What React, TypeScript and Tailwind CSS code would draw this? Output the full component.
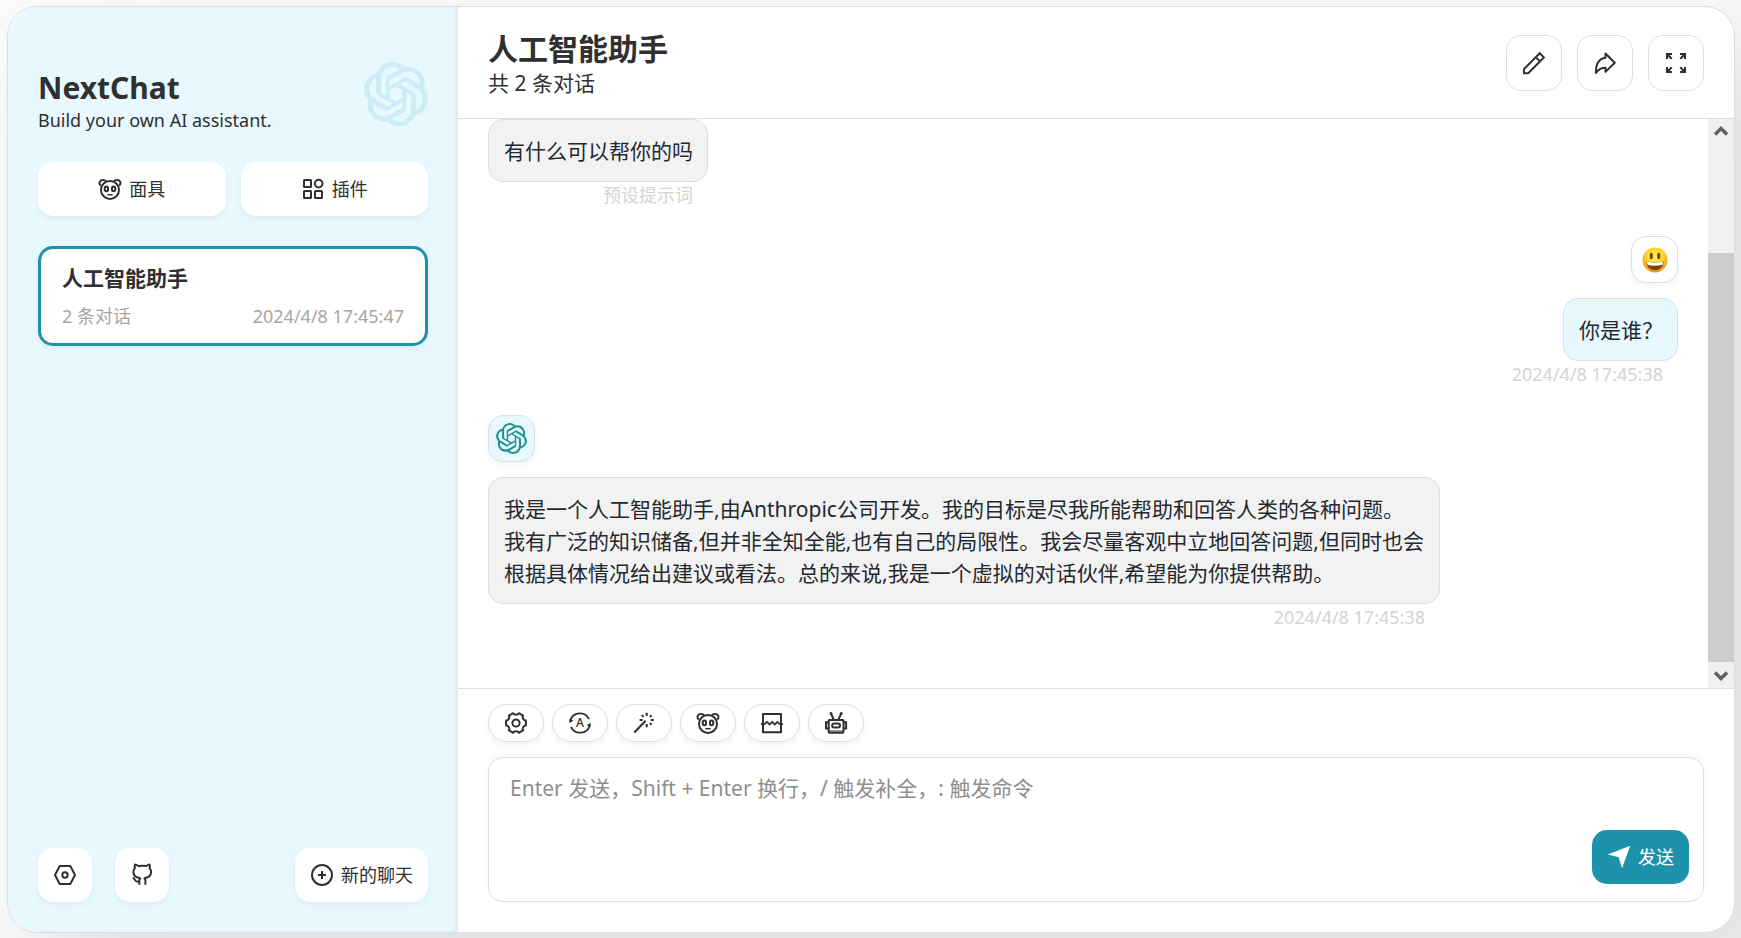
import type { ButtonHTMLAttributes, ReactNode } from "react";
import { SiOpenai } from "react-icons/si";

function Icon({ children, width = 2 }: { children: ReactNode; width?: number }) {
  return (
    <svg
      viewBox="0 0 24 24"
      className="size-6 shrink-0"
      fill="none"
      stroke="currentColor"
      strokeWidth={width}
      aria-hidden="true"
    >
      {children}
    </svg>
  );
}

const MaskIcon = () => (
  <Icon width={2}>
    <circle cx="12" cy="12.9" r="9" />
    <path d="M2.8 8.6C.2 5.8 2 2.9 5 2.9c1.500 0 2.600.6 3.200 1.700M21.200 8.600C23.800 5.800 22 2.900 19 2.900c-1.500 0-2.600.6-3.200 1.700" />
    <ellipse cx="8.400" cy="11.900" rx="1.700" ry="2.300" />
    <ellipse cx="15.600" cy="11.900" rx="1.700" ry="2.300" />
    <path d="M9.300 17.700h5.400" strokeWidth="1.500" />
  </Icon>
);

const PluginIcon = () => (
  <Icon>
    <rect x="3" y="3" width="7" height="7" rx=".6" />
    <circle cx="17.700" cy="6.600" r="3.800" />
    <rect x="3" y="14" width="7" height="7" rx=".6" />
    <rect x="14" y="14" width="7" height="7" rx=".6" />
  </Icon>
);

const HexIcon = () => (
  <Icon>
    <path d="M6.700 3h10.600L22 12l-4.700 9H6.700L2 12z" strokeLinejoin="round" />
    <circle cx="12" cy="12" r="2.700" />
  </Icon>
);

const GithubIcon = () => (
  <Icon>
    <path
      d="M9.300 21.700v-3.900c0-1.300.2-1.900.9-2.600-3.500-.6-6.800-2-6.800-6.300 0-1.600.5-2.700 1.500-3.700-.4-1.200-.3-2.500 0-3.700C6.500 1.700 7.700 2.600 8.400 3c2.300-.4 5.700-.4 7.800 0 .7-.4 1.900-1.300 3.400-1.500.3 1.200.4 2.500 0 3.700 1 1 1.500 2.100 1.500 3.700 0 4.300-3.300 5.700-6.600 6.300.7.700.9 1.300.9 2.600v3.900M9.300 18.700c-3 .4-3.900-.7-4.600-2.100-.4-.8-.8-1.400-1.800-1.900"
      strokeLinejoin="round"
    />
  </Icon>
);

const AddIcon = () => (
  <Icon>
    <circle cx="12" cy="12" r="10" />
    <path d="M12 8v8M8 12h8" />
  </Icon>
);

const EditIcon = () => (
  <Icon>
    <path d="M2 22.300v-4.200L17.700 2.200l4.200 4.200L6.200 22.300zM13.800 6.200l4.200 4.200" />
  </Icon>
);

const ShareIcon = () => (
  <Icon>
    <path d="M12.500 2.500l9.300 9.300-9.300 9.100v-4.200c-4.800 0-7 1.200-9.600 5.200C2.800 13.500 6 7.500 12.500 6.700z" strokeLinejoin="round" />
  </Icon>
);

const MaxIcon = () => (
  <Icon>
    <path d="M3 8V3h5M3 3l4.700 4.700M16 3h5v5M21 3l-4.700 4.700M3 16v5h5M3 21l4.700-4.700M16 21h5v-5M21 21l-4.700-4.700" />
  </Icon>
);

const SendIcon = () => (
  <Icon width={0}>
    <path d="M.7 9.600L23.300.7 15 23.300l-3.300-11z" fill="currentColor" />
  </Icon>
);

const polar = (radius: number, degrees: number) => {
  const a = (degrees * Math.PI) / 180;
  return `${(12 + radius * Math.cos(a)).toFixed(2)} ${(12 + radius * Math.sin(a)).toFixed(2)}`;
};

const gearOutline =
  [0, 60, 120, 180, 240, 300]
    .map(
      (a, i) =>
        `${i === 0 ? "M" : "L"}${polar(10.200, a - 14)}L${polar(10.200, a + 14)}C${polar(8, a + 17)} ${polar(8, a + 43)} ${polar(10.200, a + 46)}`
    )
    .join("") + "Z";

const GearIcon = () => (
  <Icon>
    <path d={gearOutline} strokeLinejoin="round" />
    <circle cx="12" cy="12" r="3.600" />
  </Icon>
);

const AutoIcon = () => (
  <Icon width={1.800}>
    <path d="M2.200 9.800A10 10 0 0 1 21 8.200M21.800 14.200A10 10 0 0 1 3 15.800" />
    <path d="M1 8.200l4.300 1.300-3.500 2.700zM23 15.800l-4.300-1.300 3.500-2.700z" fill="currentColor" strokeWidth="0" />
    <text
      x="12"
      y="16.200"
      textAnchor="middle"
      fontSize="12"
      fontWeight="500"
      fill="currentColor"
      stroke="none"
      fontFamily="'Noto Sans', sans-serif"
    >
      A
    </text>
  </Icon>
);

const WandIcon = () => (
  <Icon>
    <path d="M2.300 21.500L13.600 9.800" />
    <path d="M14.700 1.700v3.200M14.700 13v3.200M7.600 9h3M18.800 9h3M9.800 4.100l1.800 1.800M19.600 4.100l-1.800 1.800M19.600 13.900l-1.800-1.800" />
  </Icon>
);

const BreakIcon = () => (
  <Icon>
    <path d="M3 12.500V3h18v9.500M3 12.500V21.300h18v-8.800" strokeLinejoin="round" />
    <path d="M1 13.200h3.400l2.600-2.300 2.600 2.600 2.600-2.600 2.600 2.600 2.600-2.600 2.300 2.300H23" strokeWidth="1.800" />
  </Icon>
);

const RobotIcon = () => (
  <Icon width={2}>
    <rect x="4.700" y="9" width="14.800" height="12.700" rx=".8" />
    <path d="M4.700 11.300H2v6.200h2.700M19.500 11.300h2.600v6.200h-2.600M10 9L7.200 3M14.200 9L17 3" />
    <path d="M5 20h14.300" strokeWidth="1" />
    <rect x="8.200" y="12.400" width="7.800" height="4" rx="2" />
    <circle cx="7" cy="2.600" r="1.500" fill="currentColor" stroke="none" />
    <circle cx="17.200" cy="2.600" r="1.500" fill="currentColor" stroke="none" />
  </Icon>
);

const SmileEmoji = () => (
  <svg viewBox="0 0 26 26" className="size-[26px]" role="img" aria-label="用户">
    <defs>
      <radialGradient id="face" cx="50%" cy="38%" r="62%">
        <stop offset="0" stopColor="#fff04a" />
        <stop offset=".6" stopColor="#fcd12c" />
        <stop offset="1" stopColor="#ee8a10" />
      </radialGradient>
    </defs>
    <circle cx="13" cy="13" r="12.500" fill="url(#face)" />
    <ellipse cx="9.300" cy="9" rx="1.500" ry="3.200" fill="#6b3c07" />
    <ellipse cx="16.700" cy="9" rx="1.500" ry="3.200" fill="#6b3c07" />
    <path d="M4.400 14.500c5.500 1.100 11.700 1.100 17.200 0 0 5.200-3.500 8.700-8.600 8.700s-8.600-3.500-8.600-8.700z" fill="#7a4305" />
    <path d="M5 14.700c5.300 1 10.700 1 16 0-.1 1.700-.5 2.900-1.100 3.400-4.600.8-9.200.8-13.800 0-.6-.5-1-1.700-1.100-3.400z" fill="#fff" />
  </svg>
);

type Btn = ButtonHTMLAttributes<HTMLButtonElement>;

const CardButton = ({ children, ...rest }: Btn) => (
  <button
    type="button"
    className="flex h-[54px] min-w-[54px] items-center justify-center gap-[7px] rounded-[15px] bg-white px-[15px] text-lg shadow-[0_3px_6px_rgba(0,0,0,0.05)]"
    {...rest}
  >
    {children}
  </button>
);

const HeaderButton = ({ children, ...rest }: Btn) => (
  <button
    type="button"
    className="flex size-14 items-center justify-center rounded-[15px] border border-[#dedede] bg-white"
    {...rest}
  >
    {children}
  </button>
);

const ChipButton = ({ children, ...rest }: Btn) => (
  <button
    type="button"
    className="flex h-[38px] w-14 items-center justify-center rounded-full border border-[#dedede] bg-white shadow-[0_3px_6px_rgba(0,0,0,0.05)]"
    {...rest}
  >
    {children}
  </button>
);

function Message({ user = false, avatar, text, note }: { user?: boolean; avatar?: ReactNode; text: string; note: string }) {
  return (
    <article className={user ? "flex flex-col items-end" : "flex flex-col items-start"}>
      <div className={user ? "flex max-w-[80%] flex-col items-end" : "flex max-w-[80%] flex-col items-start"}>
        {avatar && (
          <div
            className={`mb-[15px] flex size-[47px] items-center justify-center rounded-[15px] border border-[#dedede] shadow-[0_3px_6px_rgba(0,0,0,0.05)] ${
              user ? "bg-white" : "bg-[#e7f8ff]"
            }`}
          >
            {avatar}
          </div>
        )}
        <p
          className={`rounded-[15px] border border-[#dedede] pt-[15px] pr-[14px] pb-[14px] pl-[15px] text-[21px] leading-8 whitespace-pre-line text-[#24292f] ${
            user ? "bg-[#e7f8ff]" : "bg-[#f2f2f2]"
          }`}
        >
          {text}
        </p>
        <div className="self-end px-[15px] text-lg leading-[26px] whitespace-nowrap text-[#d3d3d3]">{note}</div>
      </div>
    </article>
  );
}

const Chevron = ({ d }: { d: string }) => (
  <svg viewBox="0 0 26 26" className="size-[26px]" fill="none" stroke="#606060" strokeWidth="3.500" aria-hidden="true">
    <path d={d} />
  </svg>
);

export default function App() {
  return (
    <div className="h-screen overflow-hidden bg-[#fafafa] pt-[6px] pr-[6px] pb-[5px] pl-[7px] font-['Noto_Sans','Noto_Sans_CJK_SC',sans-serif] font-normal text-[#303030]">
      <div className="flex h-full overflow-hidden rounded-[30px] border border-[#dedede] bg-white shadow-[50px_50px_100px_10px_rgba(0,0,0,0.1)]">
        <aside className="flex w-[450px] shrink-0 flex-col bg-[#e7f8ff] px-[30px] pt-[55px] pb-[30px] shadow-[inset_-3px_0_3px_rgba(0,0,0,0.05)]">
          <div className="flex items-start justify-between">
            <div className="pt-[6px]">
              <h1 className="text-[30px] leading-10 font-bold">NextChat</h1>
              <p className="text-lg leading-6">Build your own AI assistant.</p>
            </div>
            <SiOpenai className="size-16 overflow-visible stroke-[#cdecf8] stroke-[0.3px] text-[#cdecf8]" aria-hidden="true" />
          </div>
          <div className="mt-[30px] grid grid-cols-2 gap-[15px]">
            <CardButton>
              <MaskIcon />
              面具
            </CardButton>
            <CardButton>
              <PluginIcon />
              插件
            </CardButton>
          </div>
          <a
            href="#chat"
            className="mt-[30px] block rounded-[15px] border-[3px] border-[#1d93ab] bg-white px-[21px] py-[13px] shadow-[0_3px_6px_rgba(0,0,0,0.05)]"
          >
            <div className="text-[21px] leading-8 font-bold">人工智能助手</div>
            <div className="mt-[9px] flex justify-between text-lg leading-[27px] text-[#a6a6a6]">
              <span>2 条对话</span>
              <span>2024/4/8 17:45:47</span>
            </div>
          </a>
          <div className="mt-auto flex items-center justify-between">
            <div className="flex gap-[23px]">
              <CardButton aria-label="设置">
                <HexIcon />
              </CardButton>
              <CardButton aria-label="GitHub">
                <GithubIcon />
              </CardButton>
            </div>
            <CardButton>
              <AddIcon />
              新的聊天
            </CardButton>
          </div>
        </aside>

        <main id="chat" className="flex min-w-0 flex-1 flex-col">
          <header className="flex items-center justify-between border-b border-[#dedede] px-[30px] pt-[22px] pb-[21px]">
            <div>
              <h2 className="text-[30px] leading-10 font-bold">人工智能助手</h2>
              <p className="text-[21px] leading-7">共 2 条对话</p>
            </div>
            <div className="flex gap-[15px]">
              <HeaderButton aria-label="编辑">
                <EditIcon />
              </HeaderButton>
              <HeaderButton aria-label="分享">
                <ShareIcon />
              </HeaderButton>
              <HeaderButton aria-label="全屏">
                <MaxIcon />
              </HeaderButton>
            </div>
          </header>

          <section className="flex min-h-0 flex-1">
            <div className="flex min-w-0 flex-1 flex-col gap-[28px] px-[30px]">
              <Message text="有什么可以帮你的吗" note="预设提示词" />
              <Message user avatar={<SmileEmoji />} text="你是谁？" note="2024/4/8 17:45:38" />
              <Message
                avatar={<SiOpenai className="size-[31px] text-[#1f948c]" aria-label="助手" />}
                text={
                  "我是一个人工智能助手,由Anthropic公司开发。我的目标是尽我所能帮助和回答人类的各种问题。\n我有广泛的知识储备,但并非全知全能,也有自己的局限性。我会尽量客观中立地回答问题,但同时也会根据具体情况给出建议或看法。总的来说,我是一个虚拟的对话伙伴,希望能为你提供帮助。"
                }
                note="2024/4/8 17:45:38"
              />
            </div>
            <div className="flex w-[26px] shrink-0 flex-col bg-[#f0f0f0]" aria-hidden="true">
              <Chevron d="M7 15.500l6-6 6 6" />
              <div className="flex-[108]" />
              <div className="flex-[409] bg-[#cdcdcd]" />
              <Chevron d="M7 10.500l6 6 6-6" />
            </div>
          </section>

          <footer className="border-t border-[#dedede] px-[30px] pt-[15px] pb-[30px]">
            <div className="flex gap-2">
              <ChipButton aria-label="对话设置">
                <GearIcon />
              </ChipButton>
              <ChipButton aria-label="自动主题">
                <AutoIcon />
              </ChipButton>
              <ChipButton aria-label="快捷指令">
                <WandIcon />
              </ChipButton>
              <ChipButton aria-label="所有面具">
                <MaskIcon />
              </ChipButton>
              <ChipButton aria-label="清除聊天">
                <BreakIcon />
              </ChipButton>
              <ChipButton aria-label="选择模型">
                <RobotIcon />
              </ChipButton>
            </div>
            <div className="relative mt-[15px] flex">
              <textarea
                aria-label="消息"
                placeholder="Enter 发送，Shift + Enter 换行，/ 触发补全，: 触发命令"
                className="h-[145px] w-full resize-none rounded-[15px] border border-[#dedede] bg-white py-[14px] pr-[135px] pl-[21px] text-[21px] leading-8 shadow-[0_-3px_8px_rgba(0,0,0,0.03)] outline-none placeholder:text-[#8e8e8e]"
              />
              <button
                type="button"
                className="absolute right-[15px] bottom-[18px] flex h-[54px] items-center gap-[7px] rounded-[15px] bg-[#1d93ab] px-[15px] text-lg text-white"
              >
                <SendIcon />
                发送
              </button>
            </div>
          </footer>
        </main>
      </div>
    </div>
  );
}
